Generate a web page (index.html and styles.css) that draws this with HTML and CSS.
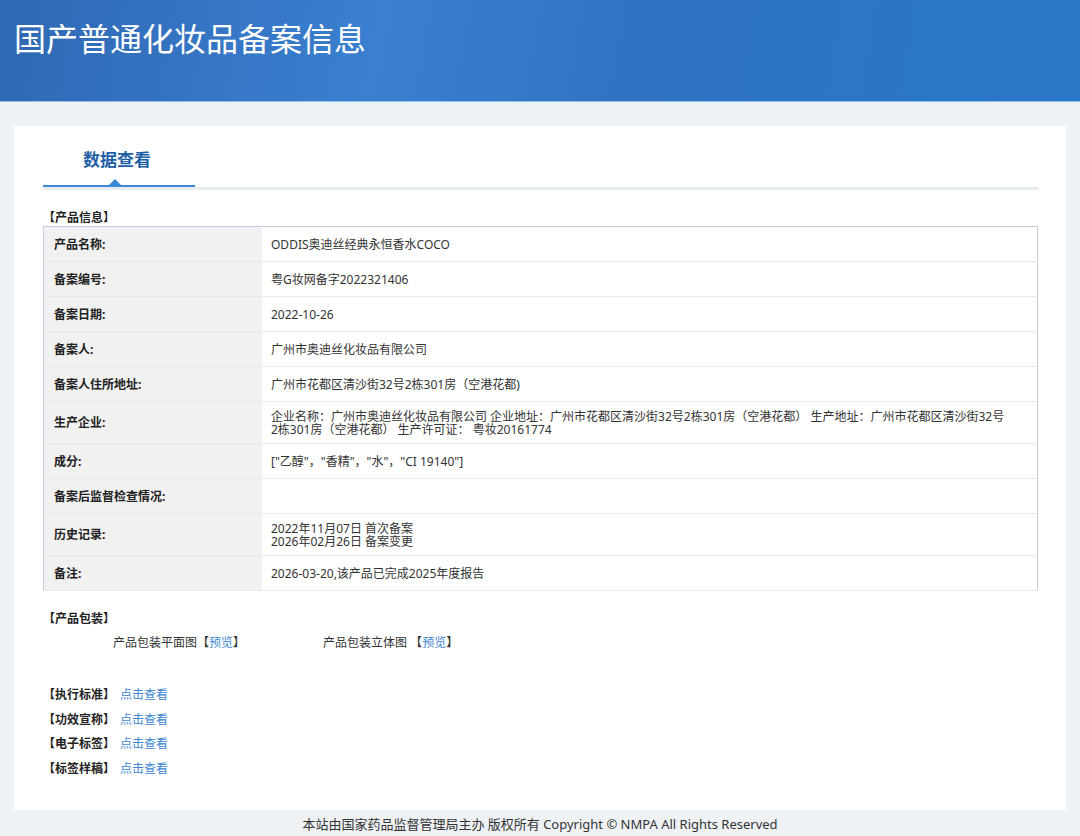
FILE: index.html
```html
<!DOCTYPE html>
<html>
<head>
  <meta charset="utf-8">
  <title>国产普通化妆品备案信息</title>
  <link rel="stylesheet" href="styles.css">
</head>
<body>
  <header class="banner">
    <h1>国产普通化妆品备案信息</h1>
  </header>
  <main class="panel">
    <div class="tabs">
      <span class="tab active">数据查看</span>
    </div>

    <h3 class="section-title">【产品信息】</h3>
    <table class="info">
      <tr><th>产品名称:</th><td>ODDIS奥迪丝经典永恒香水COCO</td></tr>
      <tr><th>备案编号:</th><td>粤G妆网备字2022321406</td></tr>
      <tr><th>备案日期:</th><td>2022-10-26</td></tr>
      <tr><th>备案人:</th><td>广州市奥迪丝化妆品有限公司</td></tr>
      <tr><th>备案人住所地址:</th><td>广州市花都区清沙街32号2栋301房（空港花都)</td></tr>
      <tr class="tall"><th>生产企业:</th><td>企业名称：广州市奥迪丝化妆品有限公司 企业地址：广州市花都区清沙街32号2栋301房（空港花都） 生产地址：广州市花都区清沙街32号2栋301房（空港花都） 生产许可证： 粤妆20161774</td></tr>
      <tr><th>成分:</th><td>["乙醇"，"香精"，"水"，"CI 19140"]</td></tr>
      <tr><th>备案后监督检查情况:</th><td></td></tr>
      <tr class="tall"><th>历史记录:</th><td>2022年11月07日 首次备案<br>2026年02月26日 备案变更</td></tr>
      <tr><th>备注:</th><td>2026-03-20,该产品已完成2025年度报告</td></tr>
    </table>

    <h3 class="section-title">【产品包装】</h3>
    <div class="pack">
      <span class="pack-item">产品包装平面图【<a href="#">预览</a>】</span>
      <span class="pack-item">产品包装立体图 【<a href="#">预览</a>】</span>
    </div>

    <ul class="links">
      <li><b>【执行标准】</b><a href="#">点击查看</a></li>
      <li><b>【功效宣称】</b><a href="#">点击查看</a></li>
      <li><b>【电子标签】</b><a href="#">点击查看</a></li>
      <li><b>【标签样稿】</b><a href="#">点击查看</a></li>
    </ul>
  </main>
  <footer class="foot">本站由国家药品监督管理局主办 版权所有 Copyright © NMPA All Rights Reserved</footer>
</body>
</html>
```

FILE: styles.css
```css
body {
  margin: 0;
  padding: 0;
  font-family: "Noto Sans", "Noto Sans CJK SC", sans-serif;
  font-size: 12px;
  color: #333333;
  background-color: #eff2f5;
}

.banner {
  height: 102px;
  background: linear-gradient(100deg, #2f68b4 0%, #3a7fd0 35%, #2f72c2 60%, #2a78c8 100%);
  border-bottom: 1px solid #8fc3ee;
  padding: 0 14px;
  box-sizing: border-box;
}

.banner h1 {
  margin: 0;
  padding-top: 19px;
  color: #ffffff;
  font-size: 32px;
  font-weight: 400;
  line-height: 40px;
}

.panel {
  display: block;
  box-sizing: border-box;
  background-color: #ffffff;
  margin: 24px 14px 0 14px;
  padding: 22px 28px 0 29px;
  height: 684px;
}

.tabs {
  border-bottom: 3px solid #e8ebef;
  height: 39px;
}

.tab {
  display: inline-block;
  position: relative;
  width: 152px;
  box-sizing: border-box;
  padding-left: 40px;
  height: 39px;
  line-height: 24px;
  font-size: 17px;
  font-weight: bold;
  color: #1e5fa6;
}

.tab.active {
  border-bottom: 2px solid #3a8ad8;
  margin-bottom: -2px;
}

.tab.active::after {
  content: "";
  position: absolute;
  left: 66px;
  bottom: 0;
  border-left: 6px solid transparent;
  border-right: 6px solid transparent;
  border-bottom: 6px solid #3a8ad8;
}

.section-title {
  margin: 0;
  font-size: 12px;
  font-weight: bold;
  color: #222222;
  line-height: 16px;
}

.tabs + .section-title {
  margin-top: 20px;
}

.info {
  width: 100%;
  border-collapse: collapse;
  border: 1px solid #c3cbe3;
  margin-bottom: 20px;
}

.info tr {
  height: 35px;
}

.info tr.tall {
  height: 42px;
}

.info th,
.info td {
  border-bottom: 1px solid #e9e9e9;
  padding: 7px 9px;
  line-height: 13px;
  text-align: left;
  vertical-align: middle;
}

.info th {
  width: 199px;
  background-color: #f1f1f1;
  font-weight: bold;
  color: #222222;
  padding-left: 10px;
}

.info td {
  color: #333333;
  padding-right: 30px;
}

.pack {
  display: flex;
  padding: 8px 0 0 70px;
  line-height: 16px;
}

.pack-item {
  width: 210px;
}

a {
  color: #3d86d0;
  text-decoration: none;
}

.links {
  list-style: none;
  margin: 36px 0 0 0;
  padding: 0;
}

.links li {
  line-height: 16px;
  margin-bottom: 8.5px;
}

.links b {
  color: #222222;
  margin-right: 5px;
}

.foot {
  text-align: center;
  font-size: 13px;
  color: #333333;
  padding: 4px 0 0 0;
  height: 22px;
}
```
